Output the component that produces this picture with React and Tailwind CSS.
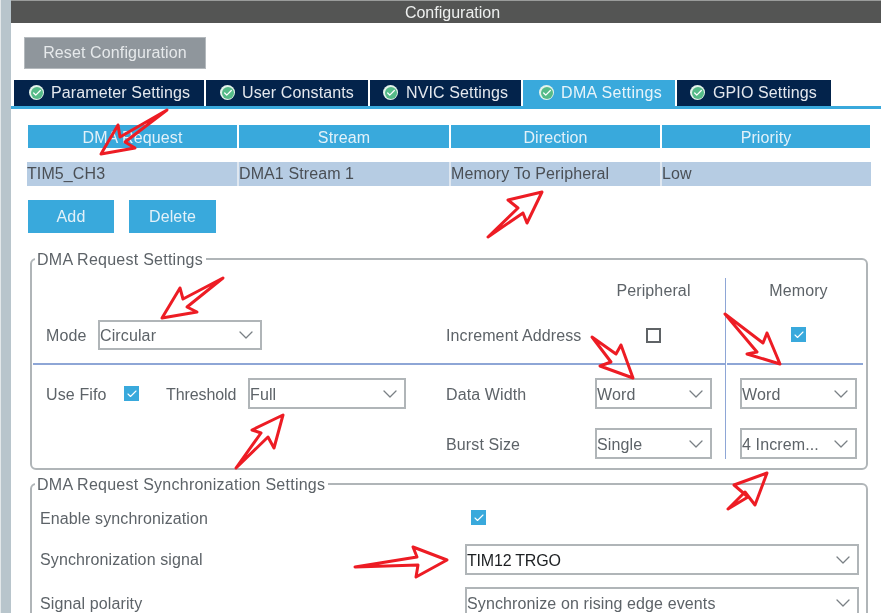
import { Check, ChevronDown } from 'lucide-react'

const TABS = [
  { label: 'Parameter Settings', width: 'w-[192px]', text: 'pl-[37px]', icon: 'left-[15px]' },
  { label: 'User Constants', width: 'w-[164px]', text: 'pl-[36px]', icon: 'left-[14px]' },
  { label: 'NVIC Settings', width: 'w-[153px]', text: 'pl-[36px]', icon: 'left-[13px]' },
  { label: 'DMA Settings', width: 'w-[154px]', text: 'pl-[38px] tracking-[0.35px]', icon: 'left-[16px]', active: true },
  { label: 'GPIO Settings', width: 'w-[156px]', text: 'pl-[36px]', icon: 'left-[13px]' },
]

const COLUMNS = ['DMA Request', 'Stream', 'Direction', 'Priority']
const ROW = ['TIM5_CH3', 'DMA1 Stream 1', 'Memory To Peripheral', 'Low']

// red hand-drawn annotations, points in page pixels
const ARROWS = [
  '167,110 120,137 118,125 101,154 135,148 125,142',
  '488,237 518,208 508,200 542,192 527,223 523,213',
  '223,278 183,299 180,288 162,318 197,312 187,307',
  '236,468 261,433 252,430 283,415 274,448 268,437',
  '355,567 417,557 413,547 447,560 416,577 418,565',
  '592,337 611,362 600,366 633,378 621,345 616,354',
  '725,314 757,352 747,354 780,364 767,333 763,343',
  '728,509 748,497 734,485 767,473 755,505 745,492',
]

function TabIcon({ className }) {
  return (
    <span className={`absolute top-[5px] flex h-[15px] w-[15px] items-center justify-center rounded-full bg-[#e4f3ea] ${className}`}>
      <span className="flex h-[12px] w-[12px] items-center justify-center rounded-full bg-[#55bb88]">
        <Check size={10} strokeWidth={3} className="text-white" />
      </span>
    </span>
  )
}

function Select({ value, className = '', dark }) {
  return (
    <div className={`flex shrink-0 items-center justify-between border-2 border-[#b0b5b8] bg-white pr-[2px] ${className}`}>
      <span className={dark ? 'pt-[2px] tracking-[-0.2px] text-[#1c1f22]' : 'pt-[2px] text-[#5d6368]'}>{value}</span>
      <ChevronDown size={24} strokeWidth={1.3} className="text-[#7a8085]" />
    </div>
  )
}

function CheckBox({ on, className = '' }) {
  if (!on) return <span className={`block h-[15px] w-[15px] shrink-0 border-2 border-[#5f6366] ${className}`} />
  return (
    <span className={`flex h-[15px] w-[15px] shrink-0 items-center justify-center bg-[#39a9dc] ${className}`}>
      <Check size={12} strokeWidth={2.2} className="text-white" />
    </span>
  )
}

function Legend({ children }) {
  return <span className="absolute left-[3px] top-[-11px] bg-white pl-[2px] pr-[3px] leading-[22px] tracking-[0.25px] text-[#5d6368]">{children}</span>
}

export default function App() {
  return (
    <div className="relative flex h-[613px] w-[881px] overflow-hidden bg-white font-['Liberation_Sans',Arial,sans-serif] text-[16px] tracking-[0.12px] blur-[0.35px]">
      <div className="w-[11px] shrink-0 border-l border-[#e3e8ea] bg-[#b8c5cc]" />

      <div className="min-w-0 flex-1">
        <div className="flex h-[23px] items-center justify-center border-t border-[#9a9c9b] bg-[#545554] pl-[13px] pt-[1px] tracking-normal text-[#eef0ef]">
          Configuration
        </div>

        <div className="pl-[13px] pt-[14px]">
          <button className="h-[32px] w-[182px] border border-[#b4b9bd] bg-[#8f969c] text-[#e6e9eb]">
            Reset Configuration
          </button>
        </div>

        <div className="mt-[11px] flex pl-[3px]">
          {TABS.map(tab => (
            <div
              key={tab.label}
              className={`relative h-[26px] border-r-2 border-white leading-[26px] ${tab.width} ${tab.text} ${
                tab.active ? 'bg-[#39a9dc] text-[#e8f4fa]' : 'bg-[#03234b] text-[#e4e8ee]'
              }`}
            >
              <TabIcon className={tab.icon} />
              {tab.label}
            </div>
          ))}
        </div>
        <div className="h-[3px] bg-[#39a9dc]" />

        <div className="ml-[17px] mt-[16px] grid w-[842px] grid-cols-[211px_212px_211px_208px]">
          {COLUMNS.map((col, i) => (
            <div key={col} className={`h-[23px] bg-[#39a9dc] text-center leading-[25px] text-[#e2f1f9] ${i < 3 ? 'border-r-2 border-white' : ''}`}>{col}</div>
          ))}
        </div>
        <div className="ml-[16px] mt-[14px] grid w-[844px] grid-cols-[212px_212px_211px_209px]">
          {ROW.map((cell, i) => (
            <div key={cell} className={`h-[24px] bg-[#b6cce3] leading-[24px] tracking-[0.1px] text-[#4a4f55] ${i < 3 ? 'border-r-2 border-[#dfe7f0]' : ''}`}>{cell}</div>
          ))}
        </div>

        <div className="ml-[17px] mt-[14px] flex gap-[15px]">
          <button className="h-[33px] w-[86px] bg-[#39a9dc] pt-[1px] text-[#e2f1f9]">Add</button>
          <button className="h-[33px] w-[87px] bg-[#39a9dc] pt-[1px] text-[#e2f1f9]">Delete</button>
        </div>

        {/* DMA Request Settings */}
        <div className="relative ml-[19px] mt-[25px] flex h-[212px] w-[838px] rounded-[6px] border-2 border-[#b0b5b8] pl-px pt-[18px] text-[#5d6368]">
          <Legend>DMA Request Settings</Legend>

          <div className="w-[692px] shrink-0">
            <div className="h-[87px] border-b-2 border-[#8ea6d6]">
              <div className="pl-[562px] text-center"><div className="h-[24px] w-[117px] leading-[25px]">Peripheral</div></div>
              <div className="mt-[18px] flex h-[30px] items-center pl-[13px]">
                <span className="w-[52px] pt-[2px]">Mode</span>
                <Select value="Circular" className="h-[30px] w-[164px]" />
                <span className="ml-[184px] w-[149px] pt-[2px]">Increment Address</span>
                <CheckBox className="ml-[51px]" />
              </div>
            </div>

            <div className="mt-[13px] flex h-[31px] items-center pl-[13px]">
              <span className="w-[78px] pt-[2px]">Use Fifo</span>
              <CheckBox on />
              <span className="ml-[27px] w-[82px] pt-[2px] tracking-[-0.1px]">Threshold</span>
              <Select value="Full" className="h-[31px] w-[158px]" />
              <span className="ml-[40px] w-[149px] pt-[2px]">Data Width</span>
              <Select value="Word" className="h-[31px] w-[117px]" />
            </div>
            <div className="mt-[19px] flex h-[31px] items-center pl-[413px]">
              <span className="w-[149px] pt-[2px]">Burst Size</span>
              <Select value="Single" className="h-[31px] w-[117px]" />
            </div>
          </div>

          <div className="h-[181px] w-[138px] shrink-0 border-l border-[#8ea6d6]">
            <div className="ml-px h-[87px] border-b-2 border-[#8ea6d6]">
              <div className="h-[24px] pl-[13px]"><div className="w-[117px] text-center leading-[25px]">Memory</div></div>
              <div className="mt-[25px] pl-[64px]"><CheckBox on /></div>
            </div>
            <div className="mt-[13px] pl-[14px]">
              <Select value="Word" className="h-[31px] w-[117px]" />
              <Select value="4 Increm..." className="mt-[19px] h-[31px] w-[117px]" />
            </div>
          </div>
        </div>

        {/* DMA Request Synchronization Settings */}
        <div className="relative ml-[19px] mt-[13px] h-[160px] w-[838px] rounded-t-[6px] border-2 border-[#b0b5b8] pl-[8px] text-[#5d6368]">
          <Legend>DMA Request Synchronization Settings</Legend>
          <div className="mt-[25px] flex h-[15px] items-center">
            <span className="w-[431px] pt-[2px]">Enable synchronization</span>
            <CheckBox on />
          </div>
          <div className="mt-[19px] flex h-[31px] items-center">
            <span className="w-[425px]">Synchronization signal</span>
            <Select value="TIM12 TRGO" dark className="h-[31px] w-[394px]" />
          </div>
          <div className="mt-[12px] flex h-[31px] items-center">
            <span className="w-[425px] pt-[2px]">Signal polarity</span>
            <Select value="Synchronize on rising edge events" className="h-[31px] w-[394px]" />
          </div>
        </div>
      </div>

      <svg className="pointer-events-none absolute left-0 top-0" width="881" height="613" viewBox="0 0 881 613" fill="none">
        {ARROWS.map(points => (
          <polygon key={points} points={points} stroke="#ed1c24" strokeWidth="3" strokeLinejoin="round" />
        ))}
      </svg>
    </div>
  )
}
